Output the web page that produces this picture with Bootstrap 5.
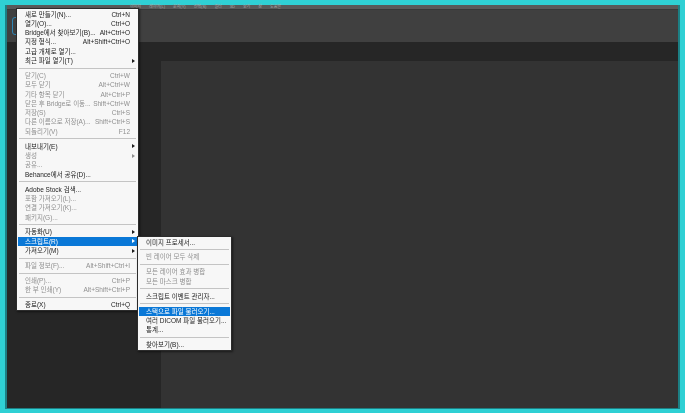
<!DOCTYPE html>
<html lang="ko">
<head>
  <meta charset="UTF-8">
  <meta name="viewport" content="width=device-width, initial-scale=1.0">
  <title>Photoshop 파일 메뉴</title>
  <link href="https://cdn.jsdelivr.net/npm/bootstrap@5.3.2/dist/css/bootstrap.min.css" rel="stylesheet">
  <style>
    html, body {
      height: 100%;
      overflow: hidden;
    }

    body {
      background-color: #2fd0d4;
      padding: 5px 5px 0 5px;
      font-family: "Liberation Sans", "Noto Sans CJK KR", sans-serif;
    }

    .app {
      height: 404px;
      background-color: #333;
      border-left: 2px solid #1c7f84;
      border-right: 2px solid #1c7f84;
      border-bottom: 1px solid #1c7f84;
    }

    .menubar {
      height: 5px;
      padding-left: 123px;
      font-size: 4px;
      line-height: 4px;
      color: #a8a8a8;
      background-color: #595959;
      border-bottom: 1px solid #383838;
      white-space: nowrap;
    }

    .optionbar {
      height: 32px;
      background-color: #404040;
    }

    .logo-btn {
      width: 13px;
      height: 18px;
      margin: 7px 0 0 5px;
      border: 1px solid #2f86b5;
      border-radius: 3px;
    }

    .tabstrip {
      height: 19px;
      background-color: #262626;
    }

    .workspace {
      height: 347px;
    }

    .toolpanel {
      width: 154px;
      background-color: #262626;
    }

    .ps-menu {
      position: absolute;
      display: block;
      min-width: 0;
      margin: 0;
      padding: .5px 1px;
      font-size: 6.5px;
      line-height: 9.3px;
      background-color: #f7f7f7;
      border: 1px solid #2b2b2b;
      border-radius: 0;
      box-shadow: 1px 1px 2px rgba(0, 0, 0, .5);
      filter: blur(.3px);
    }

    .file-menu {
      top: 8px;
      left: 16px;
      width: 123px;
    }

    .script-menu {
      top: 236px;
      left: 137px;
      width: 95px;
    }

    .ps-menu .dropdown-item {
      display: flex;
      justify-content: space-between;
      align-items: center;
      height: 9.3px;
      padding: 0 7px;
      font-size: inherit;
      color: #1c1c1c;
      white-space: nowrap;
    }

    .ps-menu .dropdown-item.disabled {
      color: #8f8f8f;
    }

    .ps-menu .dropdown-item.active {
      color: #fff;
      background-color: #0a78d7;
    }

    .ps-menu .dropdown-divider {
      margin: 2.35px 1px;
      border-color: #c4c4c4;
      opacity: 1;
    }

    .arrow {
      width: 0;
      height: 0;
      margin-right: -5px;
      border-top: 2px solid transparent;
      border-bottom: 2px solid transparent;
      border-left: 3px solid currentColor;
    }
  </style>
</head>
<body>
  <div class="app">
    <div class="menubar d-flex gap-2">
      <span>이미지</span><span>레이어(L)</span><span>문자(Y)</span><span>선택(S)</span><span>필터</span><span>3D</span><span>보기</span><span>창</span><span>도움말</span>
    </div>
    <div class="optionbar d-flex">
      <div class="logo-btn"></div>
    </div>
    <div class="tabstrip"></div>
    <div class="workspace d-flex">
      <div class="toolpanel"></div>
      <div class="flex-grow-1"></div>
    </div>
  </div>

  <!-- 파일 메뉴 -->
  <div class="dropdown-menu ps-menu file-menu">
    <a class="dropdown-item"><span>새로 만들기(N)...</span><span>Ctrl+N</span></a>
    <a class="dropdown-item"><span>열기(O)...</span><span>Ctrl+O</span></a>
    <a class="dropdown-item"><span>Bridge에서 찾아보기(B)...</span><span>Alt+Ctrl+O</span></a>
    <a class="dropdown-item"><span>지정 형식...</span><span>Alt+Shift+Ctrl+O</span></a>
    <a class="dropdown-item"><span>고급 개체로 열기...</span></a>
    <a class="dropdown-item"><span>최근 파일 열기(T)</span><i class="arrow"></i></a>
    <hr class="dropdown-divider">
    <a class="dropdown-item disabled"><span>닫기(C)</span><span>Ctrl+W</span></a>
    <a class="dropdown-item disabled"><span>모두 닫기</span><span>Alt+Ctrl+W</span></a>
    <a class="dropdown-item disabled"><span>기타 항목 닫기</span><span>Alt+Ctrl+P</span></a>
    <a class="dropdown-item disabled"><span>닫은 후 Bridge로 이동...</span><span>Shift+Ctrl+W</span></a>
    <a class="dropdown-item disabled"><span>저장(S)</span><span>Ctrl+S</span></a>
    <a class="dropdown-item disabled"><span>다른 이름으로 저장(A)...</span><span>Shift+Ctrl+S</span></a>
    <a class="dropdown-item disabled"><span>되돌리기(V)</span><span>F12</span></a>
    <hr class="dropdown-divider">
    <a class="dropdown-item"><span>내보내기(E)</span><i class="arrow"></i></a>
    <a class="dropdown-item disabled"><span>생성</span><i class="arrow"></i></a>
    <a class="dropdown-item disabled"><span>공유...</span></a>
    <a class="dropdown-item"><span>Behance에서 공유(D)...</span></a>
    <hr class="dropdown-divider">
    <a class="dropdown-item"><span>Adobe Stock 검색...</span></a>
    <a class="dropdown-item disabled"><span>포함 가져오기(L)...</span></a>
    <a class="dropdown-item disabled"><span>연결 가져오기(K)...</span></a>
    <a class="dropdown-item disabled"><span>패키지(G)...</span></a>
    <hr class="dropdown-divider">
    <a class="dropdown-item"><span>자동화(U)</span><i class="arrow"></i></a>
    <a class="dropdown-item active"><span>스크립트(R)</span><i class="arrow"></i></a>
    <a class="dropdown-item"><span>가져오기(M)</span><i class="arrow"></i></a>
    <hr class="dropdown-divider">
    <a class="dropdown-item disabled"><span>파일 정보(F)...</span><span>Alt+Shift+Ctrl+I</span></a>
    <hr class="dropdown-divider">
    <a class="dropdown-item disabled"><span>인쇄(P)...</span><span>Ctrl+P</span></a>
    <a class="dropdown-item disabled"><span>한 부 인쇄(Y)</span><span>Alt+Shift+Ctrl+P</span></a>
    <hr class="dropdown-divider">
    <a class="dropdown-item"><span>종료(X)</span><span>Ctrl+Q</span></a>
  </div>

  <!-- 스크립트 하위 메뉴 -->
  <div class="dropdown-menu ps-menu script-menu">
    <a class="dropdown-item"><span>이미지 프로세서...</span></a>
    <hr class="dropdown-divider">
    <a class="dropdown-item disabled"><span>빈 레이어 모두 삭제</span></a>
    <hr class="dropdown-divider">
    <a class="dropdown-item disabled"><span>모든 레이어 효과 병합</span></a>
    <a class="dropdown-item disabled"><span>모든 마스크 병합</span></a>
    <hr class="dropdown-divider">
    <a class="dropdown-item"><span>스크립트 이벤트 관리자...</span></a>
    <hr class="dropdown-divider">
    <a class="dropdown-item active"><span>스택으로 파일 불러오기...</span></a>
    <a class="dropdown-item"><span>여러 DICOM 파일 불러오기...</span></a>
    <a class="dropdown-item"><span>통계...</span></a>
    <hr class="dropdown-divider">
    <a class="dropdown-item"><span>찾아보기(B)...</span></a>
  </div>

  <script src="https://cdn.jsdelivr.net/npm/bootstrap@5.3.2/dist/js/bootstrap.bundle.min.js"></script>
</body>
</html>
